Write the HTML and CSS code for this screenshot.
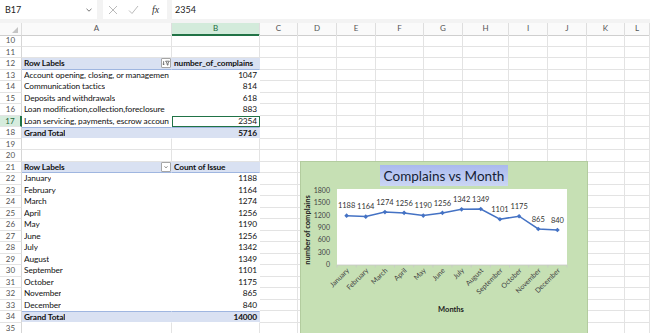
FILE: index.html
```html
<!DOCTYPE html>
<html lang="en">
<head>
  <meta charset="UTF-8" />
  <title>Complaints – Pivot Sheet</title>
  <link rel="stylesheet" href="styles.css">
</head>
<body>

  <div class="formula-bar">
    <div class="name-box">
      <span>B17</span>
      <svg class="chev" width="6" height="4" viewBox="0 0 6 4"><path d="M0.5 0.8l2.5 2.4 2.5-2.4" /></svg>
    </div>
    <div class="fx-buttons">
      <svg class="fx-icon" width="10" height="10" viewBox="0 0 10 10"><path d="M1 1l8 8M9 1l-8 8" /></svg>
      <svg class="fx-icon" width="11" height="10" viewBox="0 0 11 10"><path d="M1 5.5l3 3 6-7.5" /></svg>
      <span class="fx">fx</span>
    </div>
    <div class="formula-input">2354</div>
  </div>

  <div class="sheet" id="sheet"></div>

  <div class="chart">
    <svg id="chartSvg" width="288" height="180" viewBox="0 0 288 180">
      <defs>
        <linearGradient id="titleFill" x1="0" y1="0" x2="0" y2="1">
          <stop offset="0" stop-color="#a9b9ee" />
          <stop offset="1" stop-color="#cbd6f4" />
        </linearGradient>
      </defs>
      <rect class="chart-bg" x="0.5" y="0.5" width="287" height="179" />
      <rect x="80" y="4" width="128" height="21" fill="url(#titleFill)" />
      <text class="chart-title" x="144" y="19.5" text-anchor="middle">Complains vs Month</text>
      <rect class="plot" x="37" y="28" width="230" height="76" />
      <text class="axis-title" transform="translate(9.5,69) rotate(-90)" text-anchor="middle">number of complains</text>
      <text class="axis-title" x="151" y="151" text-anchor="middle">Months</text>
      <g id="series"></g>
    </svg>
  </div>

  <script>
    const months = ["January", "February", "March", "April", "May", "June", "July",
      "August", "September", "October", "November", "December"];
    const counts = [1188, 1164, 1274, 1256, 1190, 1256, 1342, 1349, 1101, 1175, 865, 840];

    const pivot = {
      12: { a: "Row Labels", b: "number_of_complains", kind: "head", btn: "filter" },
      13: { a: "Account opening, closing, or management", b: "1047" },
      14: { a: "Communication tactics", b: "814" },
      15: { a: "Deposits and withdrawals", b: "618" },
      16: { a: "Loan modification,collection,foreclosure", b: "883" },
      17: { a: "Loan servicing, payments, escrow account", b: "2354" },
      18: { a: "Grand Total", b: "5716", kind: "total" },
      21: { a: "Row Labels", b: "Count of Issue", kind: "head", btn: "drop" },
      34: { a: "Grand Total", b: "14000", kind: "total" }
    };
    months.forEach((m, i) => { pivot[22 + i] = { a: m, b: String(counts[i]) }; });

    const icons = {
      filter: '<svg width="8" height="8" viewBox="0 0 8 8"><path d="M1.6 2.2v3.6M0.6 4.8l1 1 1-1M3.6 2.2h3.8L6 4v2.2l-1-0.6V4z" /></svg>',
      drop: '<svg width="8" height="8" viewBox="0 0 8 8"><path d="M2.6 3.4L4 4.8l1.4-1.4" /></svg>'
    };

    const letters = ["A", "B", "C", "D", "E", "F", "G", "H", "I", "J", "K", "L"];
    let html = '<div class="row col-heads"><div class="ch corner"><span class="tri"></span></div>';
    letters.forEach(l => {
      html += `<div class="ch${l === "B" ? " ch-sel" : ""}">${l}</div>`;
    });
    html += "</div>";

    for (let r = 10; r <= 35; r++) {
      const p = pivot[r];
      html += `<div class="row"><div class="rh${r === 17 ? " rh-sel" : ""}">${r}</div>`;
      if (p) {
        const kind = p.kind ? " pv-" + p.kind : "";
        const btn = p.btn ? `<span class="pv-btn">${icons[p.btn]}</span>` : "";
        html += `<div class="cell pv${kind}"><span class="txt">${p.a}</span>${btn}</div>`;
        const isNum = !p.kind || p.kind === "total";
        html += `<div class="cell pv${kind}${isNum ? " num" : ""}${r === 17 ? " active" : ""}">${p.b}</div>`;
      } else {
        html += '<div class="cell"></div><div class="cell"></div>';
      }
      for (let c = 2; c < letters.length; c++) html += '<div class="cell"></div>';
      html += "</div>";
    }
    document.getElementById("sheet").innerHTML = html;

    // chart series, drawn in the chart's own coordinates
    const x = i => 46.6 + i * 230 / 12;
    const y = v => 103.5 - v * 74 / 1800;
    let svg = "";
    for (let v = 0; v <= 1800; v += 300) {
      svg += `<text class="tick" x="30" y="${y(v) + 2.6}" text-anchor="end">${v}</text>`;
    }
    svg += '<line class="axis" x1="37" y1="104" x2="267" y2="104" />';
    for (let k = 0; k <= 12; k++) {
      const tx = 37 + k * 230 / 12;
      svg += `<line class="axis" x1="${tx}" y1="104" x2="${tx}" y2="106.5" />`;
    }
    const pts = counts.map((v, i) => `${x(i).toFixed(1)},${y(v).toFixed(1)}`).join(" ");
    svg += `<polyline class="line" points="${pts}" />`;
    counts.forEach((v, i) => {
      const px = x(i), py = y(v);
      svg += `<path class="marker" d="M${px} ${py - 2.3}l2.3 2.3-2.3 2.3-2.3-2.3z" />`;
      svg += `<text class="dlabel" x="${px}" y="${py - 7.3}" text-anchor="middle">${v}</text>`;
      svg += `<text class="cat" transform="translate(${px + 3},110) rotate(-45)" text-anchor="end">${months[i]}</text>`;
    });
    document.getElementById("series").innerHTML = svg;
  </script>

</body>
</html>
```

FILE: styles.css
```css
* {
  box-sizing: border-box;
}
body {
  margin: 0;
  font-family: Lato, "Open Sans", sans-serif;
  background: white;
  position: relative;
  height: 333px;
  overflow: hidden;
}

/* formula bar */
.formula-bar {
  display: flex;
  height: 23px;
  padding-bottom: 4px;
  background: #f3f3f3;
}
.name-box {
  width: 97px;
  background: white;
  display: flex;
  align-items: center;
  justify-content: space-between;
  padding: 0 5px 0 5px;
  font-size: 9px;
  color: #222;
}
.chev path {
  fill: none;
  stroke: #666;
  stroke-width: 0.9;
}
.fx-buttons {
  width: 64px;
  margin-left: 6px;
  background: white;
  display: flex;
  align-items: center;
  padding-left: 5px;
  gap: 10px;
}
.fx-icon path {
  fill: none;
  stroke: #a8a8a8;
  stroke-width: 0.8;
}
.fx {
  font-family: "Liberation Serif", serif;
  font-style: italic;
  font-size: 10px;
  color: #333;
  margin-left: 3px;
}
.formula-input {
  flex: 1;
  margin-left: 5px;
  background: white;
  display: flex;
  align-items: center;
  padding-left: 3px;
  font-size: 9px;
  color: #222;
}

/* grid */
.row {
  display: grid;
  grid-template-columns: 22px 150px 88px 38px 39px 39px 48px 39px 46px 39px 39px 38px 1fr;
  height: 11.5px;
}
.col-heads {
  height: 12px;
}
.ch {
  background: #fafafa;
  color: #555;
  font-size: 8px;
  line-height: 11px;
  text-align: center;
  border-right: 1px solid #dedede;
  border-bottom: 1px solid #cfcfcf;
}
.corner {
  position: relative;
}
.tri {
  position: absolute;
  right: 3px;
  bottom: 2px;
  border-left: 6px solid transparent;
  border-bottom: 6px solid #c4c4c4;
}
.ch-sel {
  background: #d3ebdb;
  color: #1d6b40;
  border-bottom: 2px solid #217346;
}
.rh {
  background: white;
  color: #555;
  font-size: 8px;
  line-height: 10.5px;
  text-align: center;
  border-right: 1px solid #d6d6d6;
  border-bottom: 1px solid #e3e3e3;
}
.rh-sel {
  background: #d6ecdd;
  color: #1d6b40;
  border-right: 2px solid #217346;
}
.cell {
  font-size: 8.3px;
  letter-spacing: -0.1px;
  line-height: 10.5px;
  color: #111;
  padding: 0 2px;
  white-space: nowrap;
  overflow: hidden;
  border-right: 1px solid #e3e3e3;
  border-bottom: 1px solid #e3e3e3;
}

/* pivot tables */
.pv {
  border-color: white;
  display: flex;
  align-items: center;
  justify-content: space-between;
}
.pv .txt {
  overflow: hidden;
}
.num {
  justify-content: flex-end;
}
.pv-head {
  background: #d9e1f2;
  font-weight: bold;
  border-right-color: #d9e1f2;
  border-bottom-color: #9fb6e0;
  padding-right: 0;
}
.pv-total {
  background: #d9e1f2;
  font-weight: bold;
  border-top: 1px solid #9fb6e0;
  border-right-color: #d9e1f2;
  border-bottom-color: white;
  padding-right: 2px;
}
.pv-btn {
  width: 10px;
  height: 10px;
  flex: none;
  background: white;
  border: 1px solid #a6a6a6;
  border-radius: 1px;
  display: flex;
  align-items: center;
  justify-content: center;
}
.pv-btn path {
  fill: none;
  stroke: #555;
  stroke-width: 0.8;
}
.active {
  outline: 1.5px solid #217346;
  outline-offset: -1.5px;
}

/* chart floats over the cells */
.chart {
  position: absolute;
  left: 300px;
  top: 161px;
  width: 288px;
  height: 180px;
}
.chart svg {
  display: block;
  font-family: Lato, "Open Sans", sans-serif;
}
.chart-bg {
  fill: #c6e0b4;
  stroke: #b3cc9f;
}
.chart-title {
  font-size: 13.5px;
  fill: #141d36;
}
.plot {
  fill: white;
}
.axis-title {
  font-size: 7.5px;
  font-weight: bold;
  fill: #222;
}
.tick, .cat {
  font-size: 7px;
  fill: #444;
}
.dlabel {
  font-size: 7.5px;
  fill: #333;
}
.axis {
  stroke: #c8c8c8;
  stroke-width: 0.8;
}
.line {
  fill: none;
  stroke: #4472c4;
  stroke-width: 1.5;
}
.marker {
  fill: #4472c4;
}
```
